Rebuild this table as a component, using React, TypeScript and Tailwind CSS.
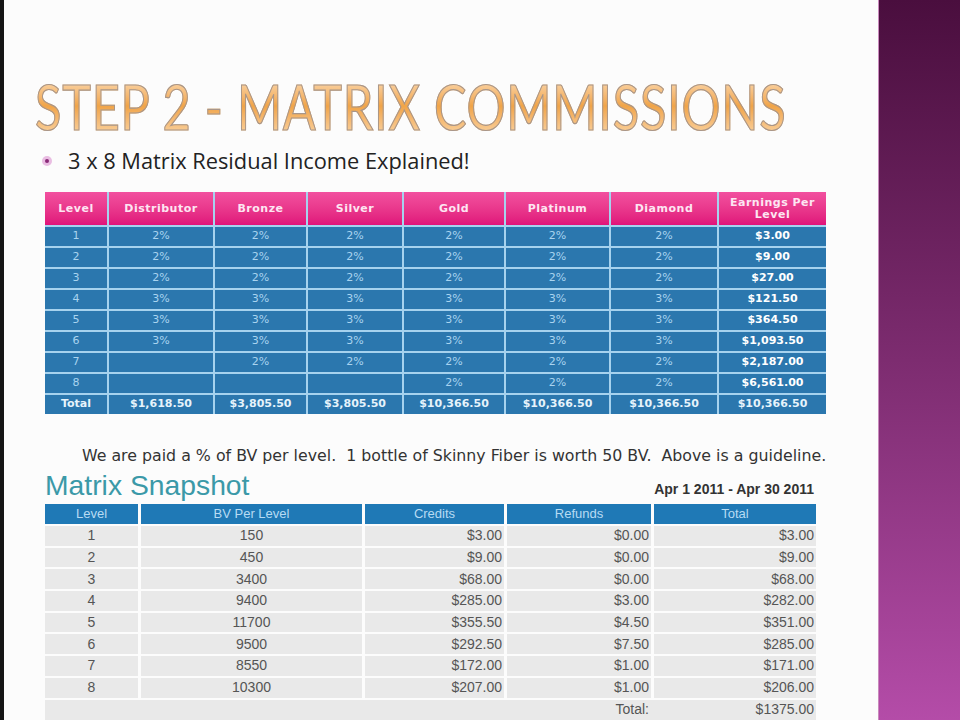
const levels = [
  ['1', '2%', '2%', '2%', '2%', '2%', '2%', '$3.00'],
  ['2', '2%', '2%', '2%', '2%', '2%', '2%', '$9.00'],
  ['3', '2%', '2%', '2%', '2%', '2%', '2%', '$27.00'],
  ['4', '3%', '3%', '3%', '3%', '3%', '3%', '$121.50'],
  ['5', '3%', '3%', '3%', '3%', '3%', '3%', '$364.50'],
  ['6', '3%', '3%', '3%', '3%', '3%', '3%', '$1,093.50'],
  ['7', '', '2%', '2%', '2%', '2%', '2%', '$2,187.00'],
  ['8', '', '', '', '2%', '2%', '2%', '$6,561.00'],
]

const totals = ['Total', '$1,618.50', '$3,805.50', '$3,805.50', '$10,366.50', '$10,366.50', '$10,366.50', '$10,366.50']

const headers = ['Level', 'Distributor', 'Bronze', 'Silver', 'Gold', 'Platinum', 'Diamond', 'Earnings Per Level']

const snapshot = [
  ['1', '150', '$3.00', '$0.00', '$3.00'],
  ['2', '450', '$9.00', '$0.00', '$9.00'],
  ['3', '3400', '$68.00', '$0.00', '$68.00'],
  ['4', '9400', '$285.00', '$3.00', '$282.00'],
  ['5', '11700', '$355.50', '$4.50', '$351.00'],
  ['6', '9500', '$292.50', '$7.50', '$285.00'],
  ['7', '8550', '$172.00', '$1.00', '$171.00'],
  ['8', '10300', '$207.00', '$1.00', '$206.00'],
]

function CommissionTable() {
  return (
    <div
      className="grid gap-[2px] bg-[#a6d2ee] font-['DejaVu_Sans',sans-serif] text-[11px] w-[781px]"
      style={{ gridTemplateColumns: '62px 104px 91px 94px 100px 103px 106px 107px' }}
    >
      {headers.map((h) => (
        <div
          key={h}
          className="h-[33px] flex items-center justify-center text-center leading-[12px] font-bold text-[#fde6f2] bg-gradient-to-b from-[#f2509f] to-[#e0127a] tracking-[0.5px]"
        >
          {h === 'Earnings Per Level' ? (
            <span>
              Earnings Per
              <br />
              Level
            </span>
          ) : (
            h
          )}
        </div>
      ))}
      {levels.map((row) =>
        row.map((c, i) => (
          <div
            key={row[0] + '-' + i}
            className={
              'h-[19px] flex items-center justify-center bg-[#2b77ae] ' +
              (i === 7 ? 'font-bold text-white' : 'text-[#a9d4f0]')
            }
          >
            {c}
          </div>
        ))
      )}
      {totals.map((c, i) => (
        <div key={'t' + i} className="h-[19px] flex items-center justify-center bg-[#2b77ae] font-bold text-[#e6f3fb]">
          {c}
        </div>
      ))}
    </div>
  )
}

function SnapshotTable() {
  const cols = '93px 221px 139px 144px 162px'
  return (
    <div className="w-[771px] font-['Liberation_Sans',sans-serif] text-[14px] text-[#555]">
      <div className="grid gap-x-[3px]" style={{ gridTemplateColumns: cols }}>
        {['Level', 'BV Per Level', 'Credits', 'Refunds', 'Total'].map((h) => (
          <div key={h} className="h-[20px] bg-[#1f79b6] text-[#b7dbf3] text-[13px] flex items-center justify-center">
            {h}
          </div>
        ))}
      </div>
      <div className="grid gap-x-[3px] gap-y-[2px] mt-[2px]" style={{ gridTemplateColumns: cols }}>
        {snapshot.map((r) =>
          r.map((c, i) => (
            <div
              key={r[0] + '-' + i}
              className={
                'h-[19.7px] bg-[#e9e9e9] flex items-center ' + (i < 2 ? 'justify-center' : 'justify-end pr-[2px]')
              }
            >
              {c}
            </div>
          ))
        )}
      </div>
      <div className="grid gap-x-[3px] mt-[2px] bg-[#e9e9e9]" style={{ gridTemplateColumns: cols }}>
        <div className="h-[20px] col-span-4 flex items-center justify-end pr-[2px]">Total:</div>
        <div className="h-[20px] flex items-center justify-end pr-[2px]">$1375.00</div>
      </div>
    </div>
  )
}

export default function App() {
  return (
    <div className="w-[960px] h-[720px] flex overflow-hidden bg-[#fcfcfc]">
      <div className="w-[4px] shrink-0 bg-[#151515]" />

      <div className="flex-1 min-w-0 flex flex-col">
        {/* Title */}
        <h1 className="self-start w-max mt-[70px] ml-[31px] text-[62px] leading-[72px] origin-left scale-x-[0.785] font-['Lato',sans-serif] tracking-[1px] bg-gradient-to-b from-[#fde8c8] via-[#f0a448] to-[#fbdcb0] bg-clip-text text-transparent [-webkit-text-stroke:1.2px_#a8968a] whitespace-nowrap">
          STEP 2 - MATRIX COMMISSIONS
        </h1>

        {/* Bullet */}
        <div className="mt-[5px] ml-[38px] flex items-center gap-[16px] font-['Open_Sans',sans-serif] text-[21.8px] leading-[28px] text-[#222]">
          <span className="w-[10px] h-[10px] rounded-full bg-[#e9bde2] flex items-center justify-center">
            <span className="w-[4px] h-[4px] rounded-full bg-[#8a2a78]" />
          </span>
          <span>3 x 8 Matrix Residual Income Explained!</span>
        </div>

        <div className="mt-[17px] ml-[41px]">
          <CommissionTable />
        </div>

        <p className="mt-[31px] ml-[78px] font-['DejaVu_Sans',sans-serif] text-[15.8px] leading-[22px] text-[#333] whitespace-pre">
          We are paid a % of BV per level.  1 bottle of Skinny Fiber is worth 50 BV.  Above is a guideline.
        </p>

        <div className="mt-[2px] ml-[41px] w-[771px] flex items-end justify-between">
          <span className="font-['Liberation_Sans',sans-serif] text-[28.3px] leading-[32px] text-[#3b99a8]">Matrix Snapshot</span>
          <span className="font-['Liberation_Sans',sans-serif] font-bold text-[14px] text-[#333] pr-[2px] mb-[1px]">
            Apr 1 2011 - Apr 30 2011
          </span>
        </div>

        <div className="mt-[3px] ml-[41px]">
          <SnapshotTable />
        </div>
      </div>

      <div className="w-[82px] shrink-0 bg-gradient-to-b from-[#4a0e3e] via-[#7d2c70] to-[#b44ca8] border-l border-[#c98abd]" />
    </div>
  )
}
